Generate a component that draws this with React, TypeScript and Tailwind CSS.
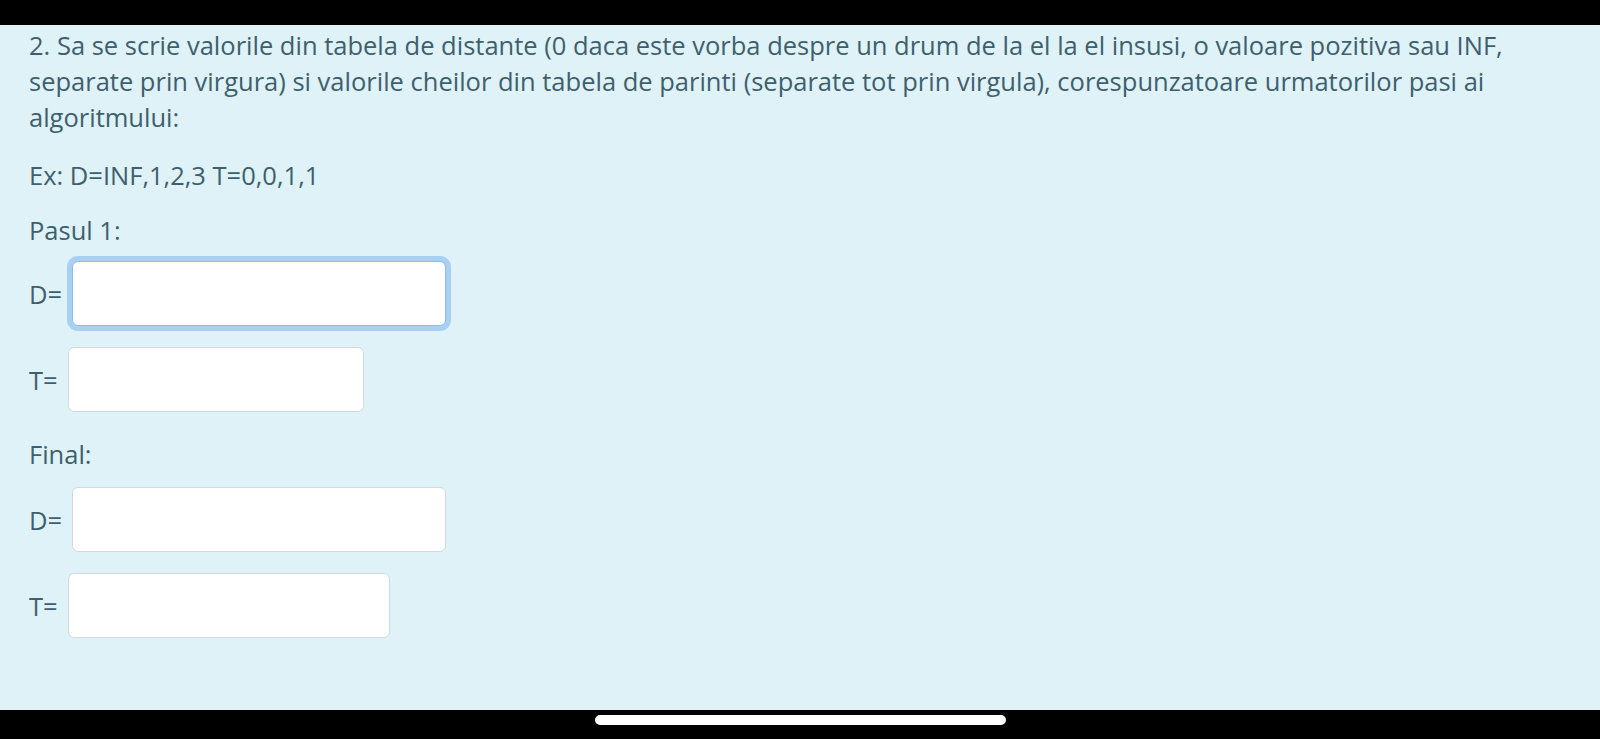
import React from "react";

function Row({ label, w, focused }: { label: string; w: string; focused?: boolean }) {
  return (
    <div className="flex items-center gap-[10px]">
      <span className="leading-[36px]">{label}</span>
      {focused ? (
        <input
          className={`${w} h-[65px] rounded-[6px] border border-[#8cbde6] bg-white outline-none ring-[5px] ring-[#a9d0f2]`}
          readOnly
        />
      ) : (
        <input
          className={`${w} h-[65px] rounded-[6px] border border-[#d3d9dc] bg-white outline-none`}
          readOnly
        />
      )}
    </div>
  );
}

export default function App() {
  return (
    <div className="w-[1600px] h-[739px] flex flex-col bg-black overflow-hidden">
      <div className="h-[25px] shrink-0 bg-black" />
      <div
        className="flex-1 bg-[#def2f8] text-[#3f5f6d] text-[25.5px] px-[29px] pt-[2px]"
        style={{ fontFamily: '"Open Sans", "Noto Sans", sans-serif' }}
      >
        <p className="leading-[36px] w-[1520px]">
          2. Sa se scrie valorile din tabela de distante (0 daca este vorba despre un drum de la el la el insusi, o valoare pozitiva sau INF, separate prin virgura) si valorile cheilor din tabela de parinti (separate tot prin virgula), corespunzatoare urmatorilor pasi ai algoritmului:
        </p>
        <p className="leading-[36px] mt-[22px]">Ex: D=INF,1,2,3 T=0,0,1,1</p>
        <p className="leading-[36px] mt-[19px]">Pasul 1:</p>
        <div className="mt-[13px] flex flex-col gap-[21px]">
          <Row label="D=" w="w-[374px]" focused />
          <Row label="T=" w="w-[296px]" />
        </div>
        <p className="leading-[36px] mt-[24px]">Final:</p>
        <div className="mt-[15px] flex flex-col gap-[21px]">
          <Row label="D=" w="w-[374px]" />
          <Row label="T=" w="w-[322px]" />
        </div>
      </div>
      <div className="h-[29px] shrink-0 bg-black flex justify-center">
        <div className="mt-[5px] w-[411px] h-[10px] rounded-full bg-white" />
      </div>
    </div>
  );
}
